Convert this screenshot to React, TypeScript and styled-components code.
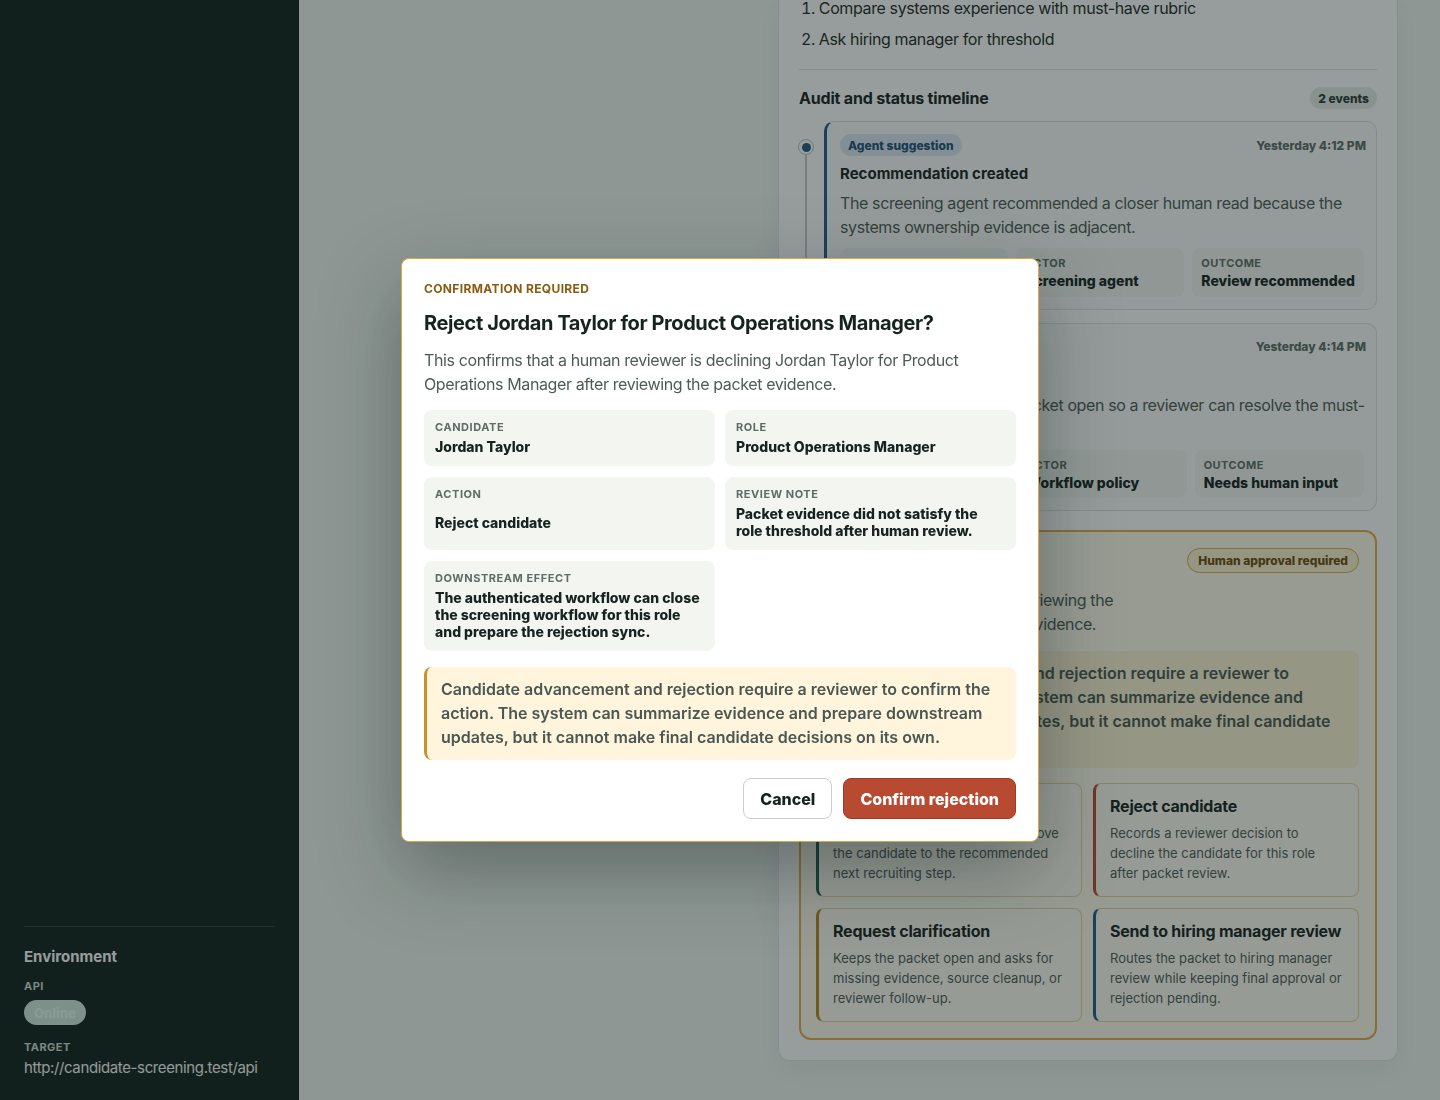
import styled, { createGlobalStyle, css } from 'styled-components';

type Tone = 'blue' | 'gold' | 'teal' | 'red';

const toneColor: Record<Tone, string> = {
  blue: '#245a8a',
  gold: '#b8861f',
  teal: '#1d5a4f',
  red: '#b84a32',
};

interface TimelineEvent {
  id: string;
  tag: string;
  tone: Tone;
  time: string;
  title: string;
  text: string;
  meta: { label: string; value: string }[];
}

const events: TimelineEvent[] = [
  {
    id: 'evt-1',
    tag: 'Agent suggestion',
    tone: 'blue',
    time: 'Yesterday 4:12 PM',
    title: 'Recommendation created',
    text: 'The screening agent recommended a closer human read because the systems ownership evidence is adjacent.',
    meta: [
      { label: 'Stage', value: 'Screening' },
      { label: 'Actor', value: 'Screening agent' },
      { label: 'Outcome', value: 'Review recommended' },
    ],
  },
  {
    id: 'evt-2',
    tag: 'Policy hold',
    tone: 'gold',
    time: 'Yesterday 4:14 PM',
    title: 'Clarification requested',
    text: 'Workflow rules kept the packet open so a reviewer can resolve the must-have gap.',
    meta: [
      { label: 'Stage', value: 'Screening' },
      { label: 'Actor', value: 'Workflow policy' },
      { label: 'Outcome', value: 'Needs human input' },
    ],
  },
];

const actions: { title: string; text: string; tone: Tone }[] = [
  {
    title: 'Advance candidate',
    text: 'Records a reviewer decision to move the candidate to the recommended next recruiting step.',
    tone: 'teal',
  },
  {
    title: 'Reject candidate',
    text: 'Records a reviewer decision to decline the candidate for this role after packet review.',
    tone: 'red',
  },
  {
    title: 'Request clarification',
    text: 'Keeps the packet open and asks for missing evidence, source cleanup, or reviewer follow-up.',
    tone: 'gold',
  },
  {
    title: 'Send to hiring manager review',
    text: 'Routes the packet to hiring manager review while keeping final approval or rejection pending.',
    tone: 'blue',
  },
];

const policyNotice =
  'Candidate advancement and rejection require a reviewer to confirm the action. The system can summarize evidence and prepare downstream updates, but it cannot make final candidate decisions on its own.';

const GlobalStyle = createGlobalStyle`
  * {
    box-sizing: border-box;
  }

  body {
    margin: 0;
    background: #f0f5f1;
    color: #17231f;
    font-family: Inter, 'Noto Sans', sans-serif;
  }
`;

const App = () => {
  return (
    <>
      <GlobalStyle />
      <Shell>
        <Sidebar>
          <SidebarFooter>
            <EnvHeading>Environment</EnvHeading>
            <EnvLabel>API</EnvLabel>
            <StatusPill>Online</StatusPill>
            <EnvLabel $tight>Target</EnvLabel>
            <EnvValue>http://candidate-screening.test/api</EnvValue>
          </SidebarFooter>
        </Sidebar>

        <Main>
          <div />
          <Panel>
            <StepList>
              <li>Compare systems experience with must-have rubric</li>
              <li>Ask hiring manager for threshold</li>
            </StepList>
            <Divider />

            <SectionHeader>
              <SectionTitle>Audit and status timeline</SectionTitle>
              <CountPill>2 events</CountPill>
            </SectionHeader>

            <Timeline>
              {events.map((event, index) => (
                <TimelineItem key={event.id}>
                  <Rail $last={index === events.length - 1}>
                    <RailDot $tone={event.tone} />
                  </Rail>
                  <EventCard $tone={event.tone}>
                    <EventHead>
                      <EventTag $tone={event.tone}>{event.tag}</EventTag>
                      <EventTime>{event.time}</EventTime>
                    </EventHead>
                    <EventTitle>{event.title}</EventTitle>
                    <EventText>{event.text}</EventText>
                    <MetaGrid>
                      {event.meta.map((item) => (
                        <MetaCell key={item.label}>
                          <MetaLabel>{item.label}</MetaLabel>
                          <MetaValue>{item.value}</MetaValue>
                        </MetaCell>
                      ))}
                    </MetaGrid>
                  </EventCard>
                </TimelineItem>
              ))}
            </Timeline>

            <DecisionBlock>
              <DecisionHead>
                <div>
                  <DecisionTitle>Reviewer decision</DecisionTitle>
                  <DecisionText>
                    Pick the outcome only after reviewing the rubric, notes, and
                    the packet evidence.
                  </DecisionText>
                </div>
                <ApprovalPill>Human approval required</ApprovalPill>
              </DecisionHead>
              <Notice $inset>{policyNotice}</Notice>
              <ActionGrid>
                {actions.map((action) => (
                  <ActionCard key={action.title} $tone={action.tone}>
                    <ActionTitle>{action.title}</ActionTitle>
                    <ActionText>{action.text}</ActionText>
                  </ActionCard>
                ))}
              </ActionGrid>
            </DecisionBlock>
          </Panel>
        </Main>
      </Shell>

      <Backdrop>
        <Dialog role='dialog' aria-modal='true' aria-labelledby='confirm-title'>
          <Eyebrow>Confirmation required</Eyebrow>
          <DialogTitle id='confirm-title'>
            Reject Jordan Taylor for Product Operations Manager?
          </DialogTitle>
          <DialogText>
            This confirms that a human reviewer is declining Jordan Taylor for
            Product Operations Manager after reviewing the packet evidence.
          </DialogText>
          <FactGrid>
            <Fact>
              <FactLabel>Candidate</FactLabel>
              <FactValue>Jordan Taylor</FactValue>
            </Fact>
            <Fact>
              <FactLabel>Role</FactLabel>
              <FactValue>Product Operations Manager</FactValue>
            </Fact>
            <Fact>
              <FactLabel>Action</FactLabel>
              <FactValue>Reject candidate</FactValue>
            </Fact>
            <Fact>
              <FactLabel>Review note</FactLabel>
              <FactValue>
                Packet evidence did not satisfy the role threshold after human
                review.
              </FactValue>
            </Fact>
            <Fact>
              <FactLabel>Downstream effect</FactLabel>
              <FactValue>
                The authenticated workflow can close the screening workflow for
                this role and prepare the rejection sync.
              </FactValue>
            </Fact>
          </FactGrid>
          <Notice>{policyNotice}</Notice>
          <DialogActions>
            <Button type='button'>Cancel</Button>
            <Button type='button' $variant='danger'>
              Confirm rejection
            </Button>
          </DialogActions>
        </Dialog>
      </Backdrop>
    </>
  );
};

const Shell = styled.div`
  display: grid;
  grid-template-columns: 299px 1fr;
  grid-template-rows: 1100px;
  height: 1100px;
  overflow: hidden;
`;

const Sidebar = styled.aside`
  display: flex;
  flex-direction: column;
  justify-content: flex-end;
  padding: 24px 24px 22px;
  background: #13211e;
`;

const SidebarFooter = styled.div`
  display: flex;
  flex-direction: column;
  align-items: flex-start;
  padding-top: 20px;
  border-top: 1px solid rgba(255, 255, 255, 0.12);
`;

const EnvHeading = styled.h3`
  margin: 0 0 12px;
  font-size: 15px;
  line-height: 20px;
  font-weight: 700;
  color: #ffffff;
`;

const EnvLabel = styled.span<{ $tight?: boolean }>`
  margin-bottom: ${({ $tight }) => ($tight ? '4px' : '7px')};
  font-size: 11px;
  line-height: 14px;
  font-weight: 700;
  letter-spacing: 0.04em;
  text-transform: uppercase;
  color: #cfd8d4;
`;

const StatusPill = styled.span`
  display: inline-flex;
  align-items: center;
  height: 25px;
  padding: 0 10px;
  margin-bottom: 15px;
  border-radius: 999px;
  background: #d0e9df;
  color: #eafaf3;
  font-size: 13px;
  font-weight: 800;
`;

const EnvValue = styled.span`
  font-size: 15px;
  line-height: 20px;
  letter-spacing: -0.025em;
  color: #f4f7f5;
`;

const Main = styled.main`
  display: grid;
  grid-template-columns: 1fr 620px;
  align-items: start;
  padding-right: 42px;
`;

const Panel = styled.section`
  padding: 0 20px 20px;
  background: #ffffff;
  border: 1px solid #dfe5e1;
  border-top: none;
  border-radius: 0 0 12px 12px;
  box-shadow: 0 10px 30px rgba(19, 33, 30, 0.06);
`;

const StepList = styled.ol`
  margin: -4px 0 0;
  padding: 0 0 0 2px;
  list-style-position: inside;
  font-size: 16px;
  line-height: 24px;
  letter-spacing: -0.024em;
  color: #1f2b27;

  li + li {
    margin-top: 7px;
  }
`;

const Divider = styled.hr`
  margin: 18px 0 17px;
  border: none;
  border-top: 1px solid #dfe5e1;
`;

const SectionHeader = styled.div`
  display: flex;
  align-items: center;
  justify-content: space-between;
  margin-bottom: 12px;
`;

const SectionTitle = styled.h3`
  margin: 0;
  font-size: 16px;
  font-weight: 700;
  letter-spacing: -0.012em;
  color: #17231f;
`;

const CountPill = styled.span`
  display: inline-flex;
  align-items: center;
  height: 22px;
  padding: 0 8px;
  border-radius: 999px;
  background: #e6ebe8;
  color: #2d3a36;
  font-size: 12px;
  font-weight: 800;
`;

const Timeline = styled.div`
  display: flex;
  flex-direction: column;
  gap: 13px;
`;

const TimelineItem = styled.div`
  display: grid;
  grid-template-columns: 25px 1fr;
`;

const Rail = styled.div<{ $last: boolean }>`
  position: relative;

  &::before {
    content: '';
    position: absolute;
    left: 6px;
    top: 34px;
    bottom: ${({ $last }) => ($last ? '0' : '-13px')};
    width: 1.5px;
    background: #c4ccc8;
  }
`;

const RailDot = styled.span<{ $tone: Tone }>`
  position: absolute;
  top: 18px;
  left: -1px;
  width: 16px;
  height: 16px;
  border-radius: 50%;
  border: 1.5px solid #b9c3bf;
  background: #ffffff;

  &::after {
    content: '';
    position: absolute;
    inset: 2.5px;
    border-radius: 50%;
    background: ${({ $tone }) => toneColor[$tone]};
  }
`;

const EventCard = styled.article<{ $tone: Tone }>`
  padding: 12px 10px 12px 13px;
  background: #fbfcfb;
  border: 1px solid #dde3df;
  border-left: 3px solid ${({ $tone }) => toneColor[$tone]};
  border-radius: 10px;
`;

const EventHead = styled.div`
  display: flex;
  align-items: center;
  justify-content: space-between;
`;

const EventTag = styled.span<{ $tone: Tone }>`
  display: inline-flex;
  align-items: center;
  height: 22px;
  padding: 0 8px;
  border-radius: 999px;
  font-size: 12px;
  font-weight: 800;
  ${({ $tone }) =>
    $tone === 'blue'
      ? css`
          background: #dbe7f1;
          color: #1f4f7a;
        `
      : css`
          background: #fbefd2;
          color: #7a5410;
        `}
`;

const EventTime = styled.span`
  font-size: 12px;
  font-weight: 800;
  color: #5f6b66;
`;

const EventTitle = styled.h4`
  margin: 8px 0 7px;
  font-size: 15px;
  line-height: 20px;
  font-weight: 700;
  color: #17231f;
`;

const EventText = styled.p`
  margin: 0 0 9px;
  font-size: 16px;
  line-height: 24px;
  letter-spacing: -0.024em;
  color: #4f5b57;
`;

const MetaGrid = styled.div`
  display: grid;
  grid-template-columns: repeat(3, 1fr);
  gap: 8px;
  padding-right: 2px;
`;

const MetaCell = styled.div`
  display: grid;
  gap: 2px;
  padding: 8px 9px 6.5px;
  border-radius: 8px;
  background: #f3f5f2;
`;

const MetaLabel = styled.span`
  font-size: 11px;
  line-height: 14px;
  font-weight: 700;
  letter-spacing: 0.04em;
  text-transform: uppercase;
  color: #5f6b66;
`;

const MetaValue = styled.span`
  font-size: 14px;
  line-height: 18px;
  font-weight: 800;
  white-space: nowrap;
  color: #17231f;
`;

const DecisionBlock = styled.section`
  margin-top: 19px;
  padding: 16px 16px 16px 15px;
  border: 2px solid #e0ae4a;
  border-radius: 12px;
  background: #fffbee;
`;

const DecisionHead = styled.div`
  display: flex;
  align-items: flex-start;
  justify-content: space-between;
  gap: 16px;
  margin-bottom: 15px;
`;

const DecisionTitle = styled.h3`
  margin: 0 0 16px;
  font-size: 18px;
  line-height: 24px;
  font-weight: 700;
  color: #17231f;
`;

const DecisionText = styled.p`
  max-width: 320px;
  margin: 0;
  font-size: 16px;
  line-height: 24px;
  letter-spacing: -0.024em;
  color: #4f5b57;
`;

const ApprovalPill = styled.span`
  flex-shrink: 0;
  display: inline-flex;
  align-items: center;
  height: 25px;
  padding: 0 10px;
  border-radius: 999px;
  border: 1px solid #d8ab4e;
  background: #fdf0cf;
  color: #6e4b0c;
  font-size: 12px;
  font-weight: 800;
`;

const Notice = styled.p<{ $inset?: boolean }>`
  margin: 0;
  padding: 10px 16px 11px 14px;
  border-left: 3px solid #c8902e;
  border-radius: 8px;
  background: ${({ $inset }) => ($inset ? '#fdf2d6' : '#fff5dc')};
  color: #4a5752;
  font-size: 16px;
  line-height: 24px;
  font-weight: 600;
`;

const ActionGrid = styled.div`
  display: grid;
  grid-template-columns: 1fr 1fr;
  gap: 11px;
  margin-top: 15px;
`;

const ActionCard = styled.div<{ $tone: Tone }>`
  padding: 11px 10px 13px 14px;
  border: 1px solid #e6d3a4;
  border-left: 3px solid ${({ $tone }) => toneColor[$tone]};
  border-radius: 8px;
  background: #fffcf4;
`;

const ActionTitle = styled.h4`
  margin: 0 0 6px;
  font-size: 16px;
  line-height: 22px;
  font-weight: 700;
  letter-spacing: -0.014em;
  color: #17231f;
`;

const ActionText = styled.p`
  margin: 0;
  padding-right: 4px;
  font-size: 13px;
  line-height: 20px;
  color: #4f5b57;
`;

const Backdrop = styled.div`
  position: fixed;
  inset: 0;
  display: flex;
  align-items: center;
  justify-content: center;
  background: rgba(19, 33, 30, 0.44);
`;

const Dialog = styled.div`
  display: flex;
  flex-direction: column;
  width: 638px;
  padding: 22px;
  background: #ffffff;
  border: 1px solid #dca640;
  border-radius: 8px;
  box-shadow: 0 28px 80px rgba(10, 22, 19, 0.35);
`;

const Eyebrow = styled.span`
  font-size: 12px;
  line-height: 16px;
  font-weight: 700;
  letter-spacing: 0.03em;
  text-transform: uppercase;
  color: #8a5a0e;
`;

const DialogTitle = styled.h2`
  margin: 13px 0 12px;
  font-size: 20px;
  line-height: 26px;
  font-weight: 700;
  letter-spacing: -0.02em;
  color: #17231f;
`;

const DialogText = styled.p`
  margin: 0 0 14px;
  font-size: 16px;
  line-height: 24px;
  letter-spacing: -0.024em;
  color: #4f5b57;
`;

const FactGrid = styled.div`
  display: grid;
  grid-template-columns: 1fr 1fr;
  gap: 11px 10px;
  margin-bottom: 16px;
`;

const Fact = styled.div`
  display: grid;
  gap: 4px;
  padding: 10px 11px 11px;
  border-radius: 8px;
  background: #f3f5f1;
`;

const FactLabel = styled.span`
  font-size: 11px;
  line-height: 14px;
  font-weight: 700;
  letter-spacing: 0.05em;
  text-transform: uppercase;
  color: #5f6b66;
`;

const FactValue = styled.span`
  font-size: 14px;
  line-height: 17px;
  font-weight: 800;
  color: #17231f;
`;

const DialogActions = styled.div`
  display: flex;
  justify-content: flex-end;
  gap: 11px;
  margin-top: 18px;
`;

const Button = styled.button<{ $variant?: 'danger' }>`
  height: 41px;
  padding: 0 16px;
  border-radius: 8px;
  font-family: inherit;
  font-size: 16px;
  font-weight: 800;
  cursor: pointer;
  ${({ $variant }) =>
    $variant === 'danger'
      ? css`
          border: 1px solid #9e3b26;
          background: #b84a32;
          color: #ffffff;
        `
      : css`
          border: 1px solid #c9d0cc;
          background: #ffffff;
          color: #17231f;
        `}
`;

export default App;
